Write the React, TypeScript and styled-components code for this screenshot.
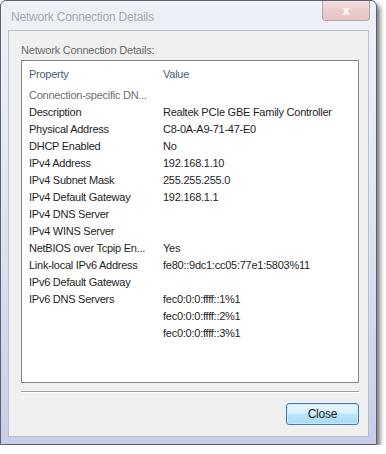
import React from "react";
import styled, { createGlobalStyle } from "styled-components";

const GlobalStyle = createGlobalStyle`
  body {
    margin: 0;
    background: #ffffff;
    font-family: "Liberation Sans", Arial, sans-serif;
  }
`;

const Window = styled.div`
  width: 361px;
  height: 436px;
  border: 1px solid #5b6170;
  border-radius: 6px 6px 0 0;
  background: linear-gradient(180deg, #eef1f7 0%, #e4e8f2 40%, #c9cdea 100%);
  box-shadow: 3px 4px 5px rgba(0, 0, 0, 0.55);
  padding: 0 7px 7px 7px;
  display: flex;
  flex-direction: column;
`;

const TitleBar = styled.div`
  height: 29px;
  display: flex;
  align-items: flex-start;
`;

const TitleText = styled.div`
  font-size: 12px;
  color: #a6a9b0;
  padding-top: 9px;
  padding-left: 3px;
  letter-spacing: -0.2px;
`;

const CaptionClose = styled.div`
  margin-left: auto;
  margin-right: -1px;
  width: 46px;
  height: 19px;
  border: 1px solid #b0a6ae;
  border-top: none;
  border-radius: 0 0 4px 4px;
  background: linear-gradient(180deg, #f1dede 0%, #ebcccc 50%, #e7c2c0 100%);
  display: flex;
  align-items: center;
  justify-content: center;
  color: #ffffff;
  font-size: 13px;
  font-weight: bold;
`;

const Client = styled.div`
  flex: 1;
  background: #f0f0f0;
  border: 1px solid #b9bdcc;
  padding: 12px 9px 0 12px;
  display: flex;
  flex-direction: column;
`;

const GroupLabel = styled.div`
  font-size: 11px;
  line-height: 14px;
  letter-spacing: -0.2px;
  color: #6a6a6a;
  margin-bottom: 3px;
`;

const ListBox = styled.div`
  height: 321px;
  border: 1px solid #828790;
  background: #ffffff;
  display: flex;
  flex-direction: column;
`;

const HeaderRow = styled.div`
  height: 25px;
  display: grid;
  grid-template-columns: 134px 1fr;
  align-items: center;
  padding-left: 7px;
  font-size: 11px;
  letter-spacing: -0.25px;
  color: #4d6078;
`;

const Row = styled.div`
  height: 17px;
  display: grid;
  grid-template-columns: 134px 1fr;
  align-items: center;
  padding-left: 7px;
  font-size: 11px;
  letter-spacing: -0.25px;
  color: #1e1e1e;
  white-space: nowrap;
`;

const Cell = styled.span<{ $muted?: boolean }>`
  overflow: hidden;
  color: ${(p) => (p.$muted ? "#6e6e6e" : "inherit")};
`;

const Separator = styled.div`
  margin-top: 8px;
  height: 1px;
  background: #a0a0a0;
  border-bottom: 1px solid #ffffff;
`;

const ButtonRow = styled.div`
  display: flex;
  justify-content: flex-end;
  margin-top: 10px;
`;

const CloseButton = styled.button`
  width: 73px;
  height: 22px;
  border: 1px solid #3c7fb1;
  border-radius: 3px;
  background: linear-gradient(180deg, #eaf6fd 0%, #d9f0fc 45%, #bee6fd 50%, #a7d9f5 100%);
  box-shadow: inset 0 0 0 1px #c6ecfb;
  font-family: "Liberation Sans", Arial, sans-serif;
  font-size: 12px;
  letter-spacing: -0.2px;
  color: #1e1e1e;
  padding: 0;
`;

const rows: [string, string, boolean?][] = [
  ["Connection-specific DN...", "", true],
  ["Description", "Realtek PCIe GBE Family Controller"],
  ["Physical Address", "C8-0A-A9-71-47-E0"],
  ["DHCP Enabled", "No"],
  ["IPv4 Address", "192.168.1.10"],
  ["IPv4 Subnet Mask", "255.255.255.0"],
  ["IPv4 Default Gateway", "192.168.1.1"],
  ["IPv4 DNS Server", ""],
  ["IPv4 WINS Server", ""],
  ["NetBIOS over Tcpip En...", "Yes"],
  ["Link-local IPv6 Address", "fe80::9dc1:cc05:77e1:5803%11"],
  ["IPv6 Default Gateway", ""],
  ["IPv6 DNS Servers", "fec0:0:0:ffff::1%1"],
  ["", "fec0:0:0:ffff::2%1"],
  ["", "fec0:0:0:ffff::3%1"],
];

const App = () => {
  return (
    <React.Fragment>
      <GlobalStyle />
      <Window>
        <TitleBar>
          <TitleText>Network Connection Details</TitleText>
          <CaptionClose>x</CaptionClose>
        </TitleBar>
        <Client>
          <GroupLabel>Network Connection Details:</GroupLabel>
          <ListBox>
            <HeaderRow>
              <span>Property</span>
              <span>Value</span>
            </HeaderRow>
            {rows.map(([prop, value, muted], i) => (
              <Row key={i}>
                <Cell $muted={muted}>{prop}</Cell>
                <Cell>{value}</Cell>
              </Row>
            ))}
          </ListBox>
          <Separator />
          <ButtonRow>
            <CloseButton>Close</CloseButton>
          </ButtonRow>
        </Client>
      </Window>
    </React.Fragment>
  );
};

export default App;
